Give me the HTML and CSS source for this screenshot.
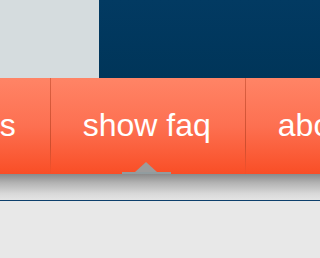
FILE: index.html
```html
<!DOCTYPE html>
<html>
<head>
<meta charset="utf-8">
<link rel="stylesheet" href="styles.css">
</head>
<body>
<header class="top">
  <div class="top-left"></div>
  <div class="top-right"></div>
</header>
<nav class="nav">
  <ul class="nav-list">
    <li class="nav-item first">news</li>
    <li class="nav-item active">show faq<span class="marker"><span class="marker-tri"></span></span></li>
    <li class="nav-item">about</li>
  </ul>
</nav>
<div class="shadow"></div>
<div class="rule"></div>
<main class="content"></main>
</body>
</html>
```
FILE: styles.css
```css
html, body {
  margin: 0;
  padding: 0;
  background: #e8e8e8;
  overflow: hidden;
}
.top {
  display: flex;
  height: 78px;
}
.top-left {
  width: 99px;
  background: #d5dcde;
}
.top-right {
  flex: 1;
  background: linear-gradient(to bottom, #023a62, #003559);
}
.nav {
  height: 96px;
  background: linear-gradient(to bottom, #ff8466 0%, #fd7051 50%, #f94e26 100%);
  overflow: hidden;
}
.nav-list {
  list-style: none;
  margin: 0 0 0 -91px;
  padding: 0;
  display: flex;
  height: 96px;
  white-space: nowrap;
}
.nav-item {
  position: relative;
  padding: 0 34px 0 32px;
  font-family: "Liberation Sans", Arial, sans-serif;
  font-size: 32px;
  line-height: 94px;
  color: #ffffff;
  border-left: 1px solid transparent;
  border-image: linear-gradient(to bottom, rgba(190, 70, 40, 0.55), rgba(190, 70, 40, 0.75) 70%, rgba(190, 70, 40, 0)) 1;
}
.nav-item.first {
  border-left: 0;
}
.marker {
  position: absolute;
  left: 71px;
  bottom: 0;
  width: 49px;
  height: 2px;
  background: #919c9f;
}
.marker-tri {
  position: absolute;
  left: 13px;
  bottom: 2px;
  width: 0;
  height: 0;
  border-left: 11px solid transparent;
  border-right: 11px solid transparent;
  border-bottom: 10px solid #9c9c9c;
}
.shadow {
  height: 26px;
  background: linear-gradient(to bottom, #8a8a8a 0%, #b4b4b4 35%, #d8d8d8 75%, #e4e4e4 100%);
}
.rule {
  height: 1px;
  background: #0d3f6c;
}
.content {
  height: 60px;
  background: #e8e8e8;
}
```
